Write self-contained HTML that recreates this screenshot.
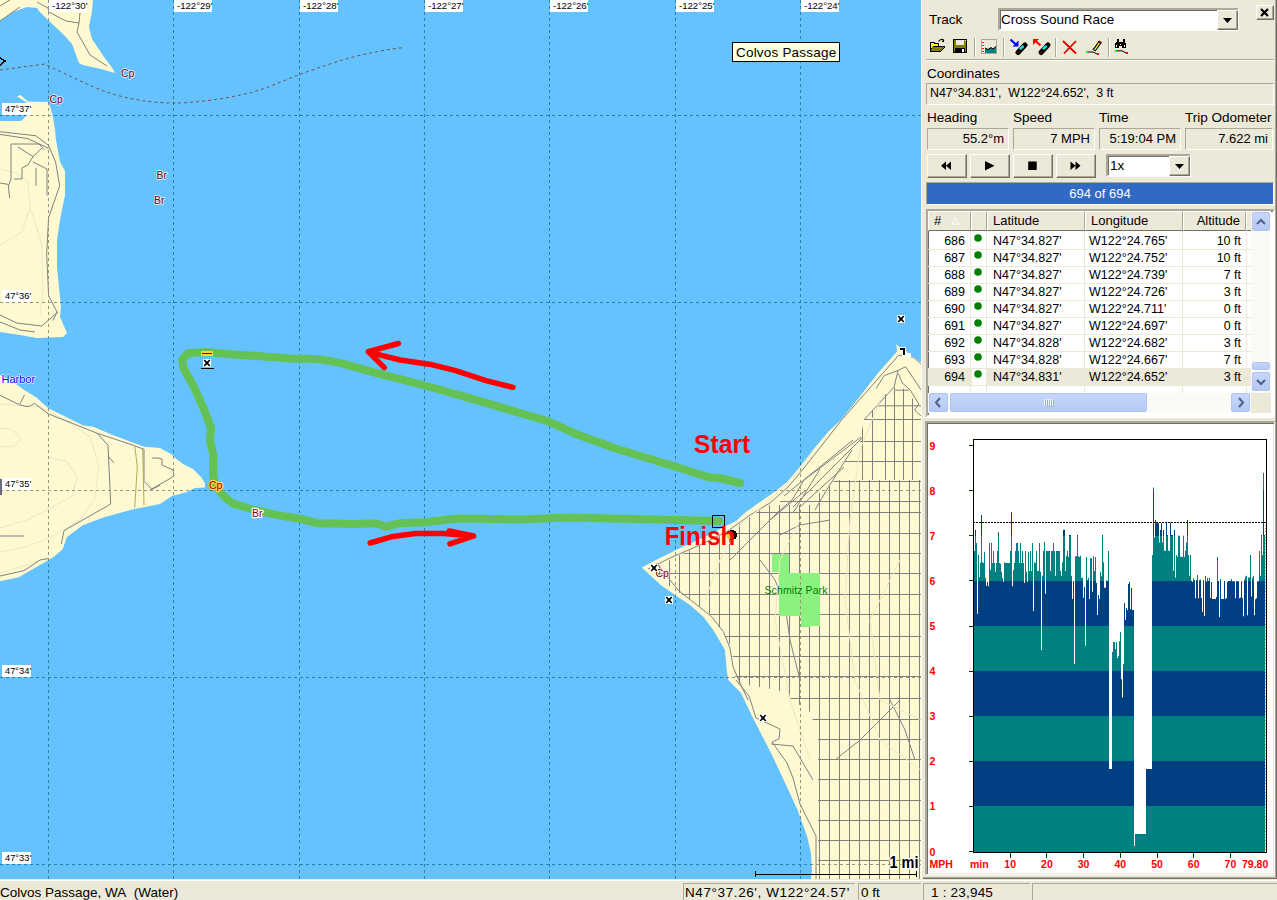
<!DOCTYPE html><html><head><meta charset="utf-8"><style>
*{box-sizing:border-box}
html,body{margin:0;padding:0}
body{width:1277px;height:900px;overflow:hidden;background:#ece9d8;position:relative;font-family:"Liberation Sans",sans-serif;font-size:13px;color:#000}
.a{position:absolute}
.sunk{position:absolute;border-top:1px solid #aca899;border-left:1px solid #aca899;border-bottom:1px solid #fff;border-right:1px solid #fff}
.fld{position:absolute;background:#ece9d8;border:1px solid #aca899;border-right-color:#fff;border-bottom-color:#fff;text-align:right;padding-right:4px;line-height:18px;font-size:13px}
.btn{position:absolute;background:#ece9d8;border:1px solid;border-color:#fff #716f64 #716f64 #fff;box-shadow:inset -1px -1px 0 #aca899}
.lbl{position:absolute;font-size:13.5px;line-height:15px;white-space:nowrap}
svg text{font-family:"Liberation Sans",sans-serif}

</style></head><body>
<svg class="a" style="left:0;top:0" width="921" height="879" viewBox="0 0 921 879" shape-rendering="crispEdges">
<rect width="921" height="879" fill="#64c2ff"/>
<defs><clipPath id="cD"><polygon points="896.2,344 899,347 904.7,349.8 911.8,356.4 921,362.2 921,879 811,879 812,871 811,853 807,836 798,811 787,787 771,753 753,718 741,693 728.3,680 726.7,670 725,650 713.3,630 703.3,616.7 690,605 675,595 661.7,585.8 641.7,567.5 656,560 678,549 707,536 724,527 736,521 746,512 760,502 773,493 787,482 799,468 813,450 828,432 840.7,420 856.7,400.4 869.1,384.4 878.9,372 885.1,364.9 892.2,356.9 897.1,351.6"/></clipPath>
<clipPath id="cG"><polygon points="921,392 921,879 818,879 818,735 810,712 778,690 740,684 734,675 732,648 720,628 708,612 690,600 668,585 652,570 660,565 680,555 710,541 730,531 745,520 765,507 790,497 825,492 836,478 843,463 858,449 861,436 864,419 878,404 884,396 893,386 896,389 903,388 912,399"/></clipPath></defs>
<polygon points="0,0 93,0 92,11 89,27 92,39 104,57 113,69 115,73 101,69 83,65 79,63 72,44 64,35 48,20 39,11 37,8 27,7 13,12 0,21" fill="#fff9d2" shape-rendering="auto"/>
<polygon points="0,121 21,121 26.5,115.5 27.5,103 17,96.5 20.4,95 28,101.6 47.8,102 49.9,106 53,117 55,130 56,140 60,162 65,171 65,195 60,220 57,240 57,268 61,307 60,317 67,333 63,337 37,338 20,335 0,332" fill="#fff9d2" shape-rendering="auto"/>
<polygon points="0,375 16.7,384.4 25,390.6 36,397.2 48.3,408.3 60,414 82.7,425.3 93.3,426.7 112,434.7 133.3,442.7 144,446.7 160,448 172,454.7 174,457 183,464 193,469 201,477 205,483 205,487.5 195,488 187,492 172,496 160,504 133.3,509.3 104,517.3 82.7,525.3 66.7,537.3 62.7,549.3 53.3,557.3 34.7,568 18.7,577.3 0,581.3" fill="#fff9d2" shape-rendering="auto"/>
<polygon points="896.2,344 899,347 904.7,349.8 911.8,356.4 921,362.2 921,879 811,879 812,871 811,853 807,836 798,811 787,787 771,753 753,718 741,693 728.3,680 726.7,670 725,650 713.3,630 703.3,616.7 690,605 675,595 661.7,585.8 641.7,567.5 656,560 678,549 707,536 724,527 736,521 746,512 760,502 773,493 787,482 799,468 813,450 828,432 840.7,420 856.7,400.4 869.1,384.4 878.9,372 885.1,364.9 892.2,356.9 897.1,351.6" fill="#fff9d2" shape-rendering="auto"/>
<g clip-path="url(#cG)"><path d="M862 380V480 M872.5 380V480 M885 380V480 M894.4 380V480 M903.3 380V480 M912.7 380V480 M780 419H921 M780 441H921 M780 461H921 M780 481H921 M780 501H921 M649 505V879 M659 505V879 M669 505V879 M679 505V879 M689 505V879 M699 505V879 M709 505V879 M719 505V879 M729 505V879 M739 505V879 M749 505V879 M759 505V879 M769 505V879 M779 505V879 M789 505V879 M799 505V879 M809 505V879 M819 480V879 M829 480V879 M839 480V879 M849 480V879 M859 480V879 M869 480V879 M879 480V879 M889 480V879 M899 480V879 M909 480V879 M919 480V879 M640 512H921 M640 533H921 M640 553H921 M640 573H921 M640 594H921 M640 614H921 M640 636H921 M640 656H921 M640 676H921 M640 698H921 M640 719H921 M640 739H921 M640 759H921 M640 779H921 M640 800H921 M640 820H921 M640 840H921 M640 860H921" stroke="#808080" stroke-width="1" fill="none"/></g>
<g clip-path="url(#cD)"><path d="M921 364L913.6 357.3L902 355.1L898.4 355.6L841.6 420L826 440L804 468L788 487L770 503L750 515L728 531L700 545L670 558L648 569 M876.2 388.4L884.2 375.6L897.6 370.7L905.6 366.7L921 389.8 M898 370.7L894 387.1L864.7 419.1 M898.5 373.8L902 382.7L910 389.8L919 404L914.5 410L921 416 M895.3 390.2H909M878 405.8H921 M861 437L820 468L804 480L792 500L778 512L765 525 M852 450L836 475L826 491L815 510 M736 680L749 696L756 718L780 729L779 739L772 742L787 763L793 778L800 804L816 836L816 879 M771 744L793 746L813 780 M760 560L775 580L785 605L790 640L800 680 M656.7 563.3L678 590L711.7 616.7L723.3 631.7L730 648L733 666.7L740 683L748 700 M780 535L800 525L830 520 M853 440L784 496 M862 438L793 507 M844 467L800 507 M820 469L793 513 M806 490L770 520L745 545L730 560 M835 760L860 740L880 720L900 700 M890 700L905 730L915 760" stroke="#808080" stroke-width="1" fill="none" shape-rendering="auto"/></g>
<polygon points="772,554 789,554 789,573 820,573 820,626 801,627 801,616 779,616 779,572 772,572" fill="#8cf27f"/>
<path clip-path="url(#cL)" d="M0 169L16.7 173L27.8 181.7L30.5 206.7L22 231.7L0 245.6 M31 210L42 245L43 290L40 315 M0 428L10.7 428.8L21.3 438.7L13.3 446.7L0 446.7 M48 457.3L66.7 461.3L77.3 477.3L72 496L48 509.3L26.7 520L0 528 M0 404L40 406.7L69 422.7L90.7 437.3L98.7 466.7L94.7 498.7L80 520L53.3 536L26.7 546.7L0 552 M0 573L26.7 565L48 557 M840 400L820 440L800 470L770 500L740 525L720 560L705 600 M880 400L860 450L850 520L845 600L855 680L880 740L921 770 M800 520L780 560L775 620L790 700L810 760 M900 560L870 620L880 700L921 720" stroke="#ece6c2" stroke-width="1" fill="none" shape-rendering="auto"/>
<path d="M37 2L48 8L49 12L66 21L79 23L80 13M79 23L77 32L90 55L107 66 M0 6L10 0M0 21L20 7 M0 131.7L36 135.8L48.6 145.6L55.6 162L59.7 185.8L48.6 217.8L46.7 253.9L48.6 295.6L57 312L52.8 320.6 M0 134.4L27.8 138.6L48.6 148.3 M11 144L11 179L8.3 186L9.7 198M11 144L39 144L44.4 149.7 M18 147L33 156.7L27.8 165L22 167.8L22 179L13.9 179M33 156.7L41.7 148.3M33 162L47 169L47 195.6M36 167.8L36 185.8M0 183L8.3 184.4 M0 315L16.7 323L41.7 326L58 312M0 322L20 330L35 332 M0 395.3L19.4 404.7L25.6 406.4L29.4 406.4L34.4 403.3L48.3 413.9L64 420L97.3 433.3L133.3 445.3L144 449.3L144 481.3L152 489.3L160 485.3M20 403.9L24.4 395 M97.3 433.3L108 445.3L110.7 504L64 530.7L61.3 544M109 457L114 463 M0 536L24 536M0 576L24 570.7L40 560L48 558.7 M152 458H158L162 459V465L173 470L174 475L171 478L150 490" stroke="#808080" stroke-width="1" fill="none" shape-rendering="auto"/>
<path d="M134.7 445.3L137.3 466.7L134.7 508M142.7 448L144 505.3" stroke="#b4ac50" stroke-width="1" fill="none" shape-rendering="auto"/>
<path d="M48.5 0V879 M173.5 0V879 M299.5 0V879 M424.5 0V879 M549.5 0V879 M675.5 0V879 M800.5 0V879 M0 115.5H921 M0 302.5H921 M0 490.5H921 M0 677.5H921 M0 864.5H921" stroke="#2a80a5" stroke-width="1" stroke-dasharray="3 3" fill="none"/>
<clipPath id="cL"><polygon points="0,0 93,0 92,11 89,27 92,39 104,57 113,69 115,73 101,69 83,65 79,63 72,44 64,35 48,20 39,11 37,8 27,7 13,12 0,21"/><polygon points="0,121 21,121 26.5,115.5 27.5,103 17,96.5 20.4,95 28,101.6 47.8,102 49.9,106 53,117 55,130 56,140 60,162 65,171 65,195 60,220 57,240 57,268 61,307 60,317 67,333 63,337 37,338 20,335 0,332"/><polygon points="0,375 16.7,384.4 25,390.6 36,397.2 48.3,408.3 60,414 82.7,425.3 93.3,426.7 112,434.7 133.3,442.7 144,446.7 160,448 172,454.7 174,457 183,464 193,469 201,477 205,483 205,487.5 195,488 187,492 172,496 160,504 133.3,509.3 104,517.3 82.7,525.3 66.7,537.3 62.7,549.3 53.3,557.3 34.7,568 18.7,577.3 0,581.3"/><polygon points="896.2,344 899,347 904.7,349.8 911.8,356.4 921,362.2 921,879 811,879 812,871 811,853 807,836 798,811 787,787 771,753 753,718 741,693 728.3,680 726.7,670 725,650 713.3,630 703.3,616.7 690,605 675,595 661.7,585.8 641.7,567.5 656,560 678,549 707,536 724,527 736,521 746,512 760,502 773,493 787,482 799,468 813,450 828,432 840.7,420 856.7,400.4 869.1,384.4 878.9,372 885.1,364.9 892.2,356.9 897.1,351.6"/></clipPath>
<path clip-path="url(#cL)" d="M48.5 0V879 M173.5 0V879 M299.5 0V879 M424.5 0V879 M549.5 0V879 M675.5 0V879 M800.5 0V879 M0 115.5H921 M0 302.5H921 M0 490.5H921 M0 677.5H921 M0 864.5H921" stroke="#96947c" stroke-width="1" stroke-dasharray="3 3" fill="none"/>
<path d="M0 70L45 64L50 66.7C70 76 90 86 105 91.5C125 98.5 150 103 173 103C195 103 225 99 250.6 92.7C268 88 285 80 300.8 74C318 68 335 62 351 57.6C370 52.5 390 49 403.5 47.6" stroke="#6e5448" stroke-width="1" stroke-dasharray="3 3" fill="none" shape-rendering="auto"/>
<rect x="49" y="0" width="38" height="12" fill="#fff"/><text x="52" y="9.3" font-size="9.6" fill="#000">-122°30'</text>
<rect x="174" y="0" width="38" height="12" fill="#fff"/><text x="177" y="9.3" font-size="9.6" fill="#000">-122°29'</text>
<rect x="300" y="0" width="38" height="12" fill="#fff"/><text x="303" y="9.3" font-size="9.6" fill="#000">-122°28'</text>
<rect x="425" y="0" width="38" height="12" fill="#fff"/><text x="428" y="9.3" font-size="9.6" fill="#000">-122°27'</text>
<rect x="550" y="0" width="38" height="12" fill="#fff"/><text x="553" y="9.3" font-size="9.6" fill="#000">-122°26'</text>
<rect x="676" y="0" width="38" height="12" fill="#fff"/><text x="679" y="9.3" font-size="9.6" fill="#000">-122°25'</text>
<rect x="801" y="0" width="38" height="12" fill="#fff"/><text x="804" y="9.3" font-size="9.6" fill="#000">-122°24'</text>
<rect x="2" y="103" width="29" height="12" fill="#fff"/><text x="5" y="111.8" font-size="9.3" fill="#000">47°37'</text>
<rect x="2" y="290" width="29" height="12" fill="#fff"/><text x="5" y="298.8" font-size="9.3" fill="#000">47°36'</text>
<rect x="2" y="478" width="29" height="12" fill="#fff"/><text x="5" y="486.8" font-size="9.3" fill="#000">47°35'</text>
<rect x="2" y="665" width="29" height="12" fill="#fff"/><text x="5" y="673.8" font-size="9.3" fill="#000">47°34'</text>
<rect x="2" y="852" width="29" height="12" fill="#fff"/><text x="5" y="860.8" font-size="9.3" fill="#000">47°33'</text>
<polyline points="740,483 719,478 708,477 670,465 614,448 576,434 549,421.6 520,413 468,397.7 424.7,385.5 374,372.3 340,362.9 317.6,359 290,358.5 241,354.9 205.6,352 187.8,353.3 182.2,360 183.3,367.8 194.4,387.8 203.3,407.8 211,427.8 210,441 213.3,454.4 213.3,476.7 215.5,485.6 223.3,495.6 232.2,503.3 254.4,510 280,515.7 298.8,518.5 317.6,523.2 355.2,524.1 375.9,523.2 385.3,526.6 400.3,523.2 424.7,522.3 458.6,518.5 520,519.4 567,517.5 632.8,519 719,521" fill="none" stroke="#64c255" stroke-width="8" stroke-linejoin="round" stroke-linecap="round" shape-rendering="auto"/>
<path d="M513 387.3L486.8 380.8L454.8 370.4L432.3 364.8L400.3 360L381.5 355.4L368.3 351.6L398.4 343.5M368.3 351.6L384.3 367.6" fill="none" stroke="#ff0000" stroke-width="5.5" stroke-linejoin="round" stroke-linecap="round" shape-rendering="auto"/>
<path d="M370.2 543L392.8 536.4L415.3 533.5L443.5 533.5L473.6 536L449.2 531M473.6 536L450 543.9" fill="none" stroke="#ff0000" stroke-width="5.5" stroke-linejoin="round" stroke-linecap="round" shape-rendering="auto"/>
<text x="694" y="452.6" font-size="25.5" textLength="56.3" lengthAdjust="spacingAndGlyphs" font-weight="bold" fill="#ff0000">Start</text>
<rect x="712.5" y="515.5" width="12" height="12" fill="none" stroke="#000" stroke-width="1"/>
<circle cx="732" cy="535" r="5" fill="#000"/><circle cx="730" cy="536" r="3" fill="#d8d030"/>
<text x="664.7" y="544.8" font-size="26" textLength="70.5" lengthAdjust="spacingAndGlyphs" font-weight="bold" fill="#ff0000">Finish</text>
<text x="764.5" y="593.5" font-size="10.5" fill="#008000" letter-spacing="0.1">Schmitz Park</text>
<text x="1.5" y="383" font-size="11" fill="#0000ff" stroke="#fff" stroke-width="1.2" paint-order="stroke" stroke-linejoin="round">Harbor</text>
<text x="121" y="76.5" font-size="10.5" fill="#800000" stroke="#fff" stroke-width="1.6" stroke-opacity="0.8" paint-order="stroke" stroke-linejoin="round">Cp</text>
<text x="49.5" y="102.8" font-size="10.5" fill="#800000" stroke="#fff" stroke-width="1.6" stroke-opacity="0.8" paint-order="stroke" stroke-linejoin="round">Cp</text>
<text x="156.5" y="179" font-size="10.5" fill="#800000" stroke="#fff" stroke-width="1.6" stroke-opacity="0.8" paint-order="stroke" stroke-linejoin="round">Br</text>
<text x="154" y="204" font-size="10.5" fill="#800000" stroke="#fff" stroke-width="1.6" stroke-opacity="0.8" paint-order="stroke" stroke-linejoin="round">Br</text>
<text x="655.5" y="576.5" font-size="10.5" fill="#800000" stroke="#fff" stroke-width="1.6" stroke-opacity="0.8" paint-order="stroke" stroke-linejoin="round">Cp</text>
<text x="209" y="489" font-size="10.5" fill="#a00000" stroke="#ffd040" stroke-width="2.5" paint-order="stroke" stroke-linejoin="round">Cp</text>
<text x="252" y="517" font-size="10.5" fill="#900000" stroke="#fff" stroke-width="2.5" paint-order="stroke" stroke-linejoin="round">Br</text>
<rect x="897" y="314.5" width="8" height="8.5" fill="#fff"/><path d="M898.2 316L903.8 322M903.8 316L898.2 322" stroke="#000" stroke-width="1.6" shape-rendering="auto"/><circle cx="901" cy="319" r="2.2" fill="#000" opacity="0.35"/>
<rect x="650" y="563.5" width="8" height="8.5" fill="#fff"/><path d="M651.2 565L656.8 571M656.8 565L651.2 571" stroke="#000" stroke-width="1.6" shape-rendering="auto"/><circle cx="654" cy="568" r="2.2" fill="#000" opacity="0.35"/>
<rect x="665" y="595.5" width="8" height="8.5" fill="#fff"/><path d="M666.2 597L671.8 603M671.8 597L666.2 603" stroke="#000" stroke-width="1.6" shape-rendering="auto"/><circle cx="669" cy="600" r="2.2" fill="#000" opacity="0.35"/>
<rect x="759" y="713.5" width="8" height="8.5" fill="#fff"/><path d="M760.2 715L765.8 721M765.8 715L760.2 721" stroke="#000" stroke-width="1.6" shape-rendering="auto"/><circle cx="763" cy="718" r="2.2" fill="#000" opacity="0.35"/>
<rect x="203" y="358.5" width="8" height="8.5" fill="#fff"/><path d="M204.2 360L209.8 366M209.8 360L204.2 366" stroke="#000" stroke-width="1.6" shape-rendering="auto"/><circle cx="207" cy="363" r="2.2" fill="#000" opacity="0.35"/>
<rect x="201" y="351" width="12" height="5" fill="#ffd040"/><path d="M202 353H212" stroke="#a00000"/><rect x="201" y="368" width="13" height="1" fill="#000"/>
<rect x="732.5" y="42.5" width="107" height="19" fill="#ffffe1" stroke="#000"/><text x="736" y="57" font-size="13.5" letter-spacing="0.2" fill="#000">Colvos Passage</text>
<text x="889.5" y="867.8" font-size="17" font-weight="bold" textLength="29" lengthAdjust="spacingAndGlyphs" fill="#000" stroke="#fff" stroke-width="3" paint-order="stroke" stroke-linejoin="round">1 mi</text>
<path d="M755.5 871V877M755.5 874H917M916.5 871V877" stroke="#000" stroke-width="1" fill="none"/>
<path d="M0 58L5 61L0 65" stroke="#000" fill="none" stroke-width="1.5"/><rect x="0" y="479" width="1.5" height="16" fill="#6a6a78"/>
<path d="M900 349H904V355H911" stroke="#fff" stroke-width="3.6" fill="none"/><path d="M900 349H904V355" stroke="#000" stroke-width="1.8" fill="none"/>
</svg>
<div class="a" style="left:921px;top:0;width:1px;height:879px;background:#fff"></div>
<div class="a" style="left:1275px;top:0;width:1px;height:879px;background:#aca899"></div>
<div class="a" style="left:1276px;top:0;width:1px;height:879px;background:#716f64"></div>
<div class="lbl" style="left:929px;top:12px">Track</div>
<div class="a" style="left:998px;top:8px;width:241px;height:23px;background:#fff;border:2px solid;border-color:#aca899 #fff #fff #aca899;box-shadow:inset 1px 1px 0 #716f64"></div>
<div class="lbl" style="left:1001px;top:12px">Cross Sound Race</div>
<div class="btn" style="left:1217px;top:10px;width:21px;height:20px"></div>
<svg class="a" style="left:1217px;top:10px" width="21" height="20"><path d="M6 8H15L10.5 13Z" fill="#000"/></svg>
<div class="btn" style="left:1256px;top:5px;width:18px;height:15px"></div>
<svg class="a" style="left:1256px;top:5px" width="18" height="15"><path d="M5 4L12 11M12 4L5 11" stroke="#000" stroke-width="2.2"/></svg>
<svg class="a" style="left:921px;top:33px" width="356" height="30" shape-rendering="crispEdges">
<g transform="translate(-921,-33)">
<path d="M930 42H934L935 43H939V46H945V47L941 52H930Z" fill="#000"/>
<path d="M931 43H934V44H938V46H933L931 49Z" fill="#ffff00"/>
<path d="M932 47H944L940 51H931Z" fill="#808000"/>
<path d="M938.5 41.5Q941 38 944 40.5" stroke="#000" fill="none" stroke-width="1.2" shape-rendering="auto"/>
<path d="M943 39.5L945 42.5L942 42Z" fill="#000"/>
<rect x="953" y="39" width="14" height="14" fill="#000"/>
<rect x="954" y="40" width="12" height="12" fill="#808000"/>
<rect x="956" y="40" width="8" height="5" fill="#ece9d8"/>
<rect x="955" y="48" width="10" height="5" fill="#000"/>
<rect x="962" y="49" width="2" height="3" fill="#fff"/>
<rect x="965" y="40" width="1" height="1" fill="#fff"/>
<rect x="974" y="38" width="1" height="19" fill="#aca899"/><rect x="975" y="38" width="1" height="19" fill="#fff"/>
<rect x="981" y="39" width="16" height="15" fill="#aca899"/>
<rect x="982" y="40" width="14" height="13" fill="#ece9d8"/>
<rect x="982" y="40" width="2" height="13" fill="#fff"/>
<path d="M982 42.5H984M982 45.5H984M982 48.5H984M982 51.5H984" stroke="#ff0000"/>
<path d="M985 48L988 49.5L991 47.5L993 49L996 46.5V53H985Z" fill="#008080" shape-rendering="auto"/>
<path d="M985 48L988 49.5L991 47.5L993 49L996 46.5" stroke="#000" fill="none" shape-rendering="auto"/>
<rect x="1003" y="38" width="1" height="19" fill="#aca899"/><rect x="1004" y="38" width="1" height="19" fill="#fff"/>
<path d="M1010.5 39.5L1017 45.5" stroke="#0000ff" stroke-width="2.2" shape-rendering="auto"/><path d="M1018.5 46.5L1012.5 46.5L1018.5 40.5Z" fill="#0000ff" shape-rendering="auto"/>
<path d="M1018 52.5L1025 45" stroke="#000" stroke-width="5" stroke-linecap="round" shape-rendering="auto"/><path d="M1020.5 48.5L1023 46.5" stroke="#00e8f0" stroke-width="2.4" stroke-linecap="round" shape-rendering="auto"/><path d="M1017.5 53L1019.5 51" stroke="#a00000" stroke-width="1" shape-rendering="auto"/>
<path d="M1040.5 45.5L1034 39.5" stroke="#ff0000" stroke-width="2.2" shape-rendering="auto"/><path d="M1033 39L1039 39L1033 45Z" fill="#ff0000" shape-rendering="auto"/>
<path d="M1041 52.5L1048 45" stroke="#000" stroke-width="5" stroke-linecap="round" shape-rendering="auto"/><path d="M1043.5 48.5L1046 46.5" stroke="#00e8f0" stroke-width="2.4" stroke-linecap="round" shape-rendering="auto"/><path d="M1040.5 53L1042.5 51" stroke="#a00000" stroke-width="1" shape-rendering="auto"/>
<rect x="1055" y="38" width="1" height="19" fill="#aca899"/><rect x="1056" y="38" width="1" height="19" fill="#fff"/>
<path d="M1063 41L1076 53.5M1076 41L1064 53.5" stroke="#e00000" stroke-width="1.8" shape-rendering="auto"/>
<path d="M1094 50.5L1100.5 41.5" stroke="#000" stroke-width="3.6" shape-rendering="auto"/><path d="M1094.6 49.8L1099.6 42.6" stroke="#ffff00" stroke-width="1.3" shape-rendering="auto"/><path d="M1099 41.5L1101 43" stroke="#800000" stroke-width="2" shape-rendering="auto"/>
<path d="M1087 52H1093L1097 54" stroke="#000" fill="none" shape-rendering="auto"/>
<rect x="1086" y="51" width="2" height="2" fill="#00ff00"/><rect x="1097" y="53" width="2" height="2" fill="#ff0000"/>
<rect x="1108" y="38" width="1" height="19" fill="#aca899"/><rect x="1109" y="38" width="1" height="19" fill="#fff"/>
<path d="M1116.5 39H1118.5V42H1122.5V39H1124.5V42L1126 43V48H1122V46H1119V48H1115V43L1116.5 42Z" fill="#000"/>
<rect x="1116" y="45" width="1" height="2" fill="#fff"/><rect x="1124" y="45" width="1" height="2" fill="#fff"/><rect x="1120" y="43.5" width="1" height="1" fill="#fff"/>
<path d="M1116 50.8H1122L1126 53" stroke="#000" fill="none" shape-rendering="auto"/>
<rect x="1115" y="50" width="2" height="2" fill="#00ff00"/><rect x="1126" y="52" width="2" height="2" fill="#ff0000"/>
<rect x="926" y="59" width="348" height="1" fill="#aca899"/><rect x="926" y="60" width="348" height="1" fill="#fff"/>
</g></svg>
<div class="lbl" style="left:927px;top:66px">Coordinates</div>
<div class="fld" style="left:926px;top:83px;width:348px;height:22px;text-align:left;padding-left:3px;line-height:19px;font-size:12.4px">N47°34.831&#39;,&nbsp; W122°24.652&#39;,&nbsp; 3 ft</div>
<div class="lbl" style="left:927px;top:110px">Heading</div>
<div class="lbl" style="left:1013px;top:110px">Speed</div>
<div class="lbl" style="left:1099px;top:110px">Time</div>
<div class="lbl" style="left:1185px;top:110px">Trip Odometer</div>
<div class="fld" style="left:927px;top:128px;width:82px;height:22px;line-height:19px">55.2°m</div>
<div class="fld" style="left:1013px;top:128px;width:82px;height:22px;line-height:19px">7 MPH</div>
<div class="fld" style="left:1099px;top:128px;width:82px;height:22px;line-height:19px">5:19:04 PM</div>
<div class="fld" style="left:1185px;top:128px;width:88px;height:22px;line-height:19px">7.622 mi</div>
<div class="btn" style="left:927px;top:154px;width:40px;height:24px"></div>
<svg class="a" style="left:928px;top:154px" width="40" height="24" fill="#000"><path d="M13 11.8L18 7.5V16ZM18 11.8L23 7.5V16Z"/></svg>
<div class="btn" style="left:970px;top:154px;width:40px;height:24px"></div>
<svg class="a" style="left:971px;top:154px" width="40" height="24" fill="#000"><path d="M14 7L23.5 11.8L14 16.6Z"/></svg>
<div class="btn" style="left:1013px;top:154px;width:40px;height:24px"></div>
<svg class="a" style="left:1014px;top:154px" width="40" height="24" fill="#000"><rect x="14.2" y="7.5" width="8.5" height="8.5"/></svg>
<div class="btn" style="left:1056px;top:154px;width:40px;height:24px"></div>
<svg class="a" style="left:1057px;top:154px" width="40" height="24" fill="#000"><path d="M13.5 7.5L18.5 11.8L13.5 16ZM18.5 7.5L23.5 11.8L18.5 16Z"/></svg>
<div class="a" style="left:1106px;top:154px;width:85px;height:23px;background:#fff;border:2px solid;border-color:#aca899 #fff #fff #aca899;box-shadow:inset 1px 1px 0 #716f64"></div>
<div class="lbl" style="left:1110px;top:158px">1x</div>
<div class="btn" style="left:1169px;top:156px;width:21px;height:20px"></div>
<svg class="a" style="left:1169px;top:156px" width="21" height="20"><path d="M6 8H15L10.5 13Z" fill="#000"/></svg>
<div class="a" style="left:926px;top:182px;width:348px;height:23px;background:#316ac5;border:1px solid;border-color:#aca899 #fff #fff #aca899"></div>
<div class="a" style="left:926px;top:186px;width:348px;text-align:center;color:#fff;font-size:13px;line-height:15px">694 of 694</div>
<div class="a" style="left:926px;top:209px;width:349px;height:208px;border:2px solid;border-color:#aca899 #fff #fff #aca899;background:#fff;box-shadow:inset 1px 1px 0 #716f64"></div>
<div class="a" style="left:928px;top:211px;width:43px;height:20px;background:#ece9d8;border:1px solid;border-color:#fff #aca899 #716f64 #fff;font-size:13px;line-height:18px;text-align:left;padding-left:5px">#</div>
<div class="a" style="left:971px;top:211px;width:16px;height:20px;background:#ece9d8;border:1px solid;border-color:#fff #aca899 #716f64 #fff;font-size:13px;line-height:18px;text-align:left;padding-left:5px"></div>
<div class="a" style="left:987px;top:211px;width:98px;height:20px;background:#ece9d8;border:1px solid;border-color:#fff #aca899 #716f64 #fff;font-size:13px;line-height:18px;text-align:left;padding-left:5px">Latitude</div>
<div class="a" style="left:1085px;top:211px;width:98px;height:20px;background:#ece9d8;border:1px solid;border-color:#fff #aca899 #716f64 #fff;font-size:13px;line-height:18px;text-align:left;padding-left:5px">Longitude</div>
<div class="a" style="left:1183px;top:211px;width:63px;height:20px;background:#ece9d8;border:1px solid;border-color:#fff #aca899 #716f64 #fff;font-size:13px;line-height:18px;text-align:right;padding-right:5px">Altitude</div>
<div class="a" style="left:1246px;top:211px;width:5px;height:20px;background:#ece9d8;border:1px solid;border-color:#fff #aca899 #716f64 #fff;font-size:13px;line-height:18px;text-align:left;padding-left:5px"></div>
<svg class="a" style="left:951px;top:217px" width="9" height="8"><path d="M4.5 1L8 7H1Z" fill="none" stroke="#fff"/></svg>
<div class="a" style="left:928px;top:233px;width:37px;text-align:right;font-size:12.5px;line-height:17px">686</div>
<svg class="a" style="left:973px;top:233px" width="10" height="10"><circle cx="5" cy="5" r="3.8" fill="#008000"/></svg>
<div class="a" style="left:993px;top:233px;font-size:12.5px;line-height:17px;white-space:nowrap">N47°34.827&#39;</div>
<div class="a" style="left:1089px;top:233px;font-size:12.5px;line-height:17px;white-space:nowrap">W122°24.765&#39;</div>
<div class="a" style="left:1183px;top:233px;width:58px;text-align:right;font-size:12.5px;line-height:17px">10 ft</div>
<div class="a" style="left:928px;top:250px;width:37px;text-align:right;font-size:12.5px;line-height:17px">687</div>
<svg class="a" style="left:973px;top:250px" width="10" height="10"><circle cx="5" cy="5" r="3.8" fill="#008000"/></svg>
<div class="a" style="left:993px;top:250px;font-size:12.5px;line-height:17px;white-space:nowrap">N47°34.827&#39;</div>
<div class="a" style="left:1089px;top:250px;font-size:12.5px;line-height:17px;white-space:nowrap">W122°24.752&#39;</div>
<div class="a" style="left:1183px;top:250px;width:58px;text-align:right;font-size:12.5px;line-height:17px">10 ft</div>
<div class="a" style="left:928px;top:267px;width:37px;text-align:right;font-size:12.5px;line-height:17px">688</div>
<svg class="a" style="left:973px;top:267px" width="10" height="10"><circle cx="5" cy="5" r="3.8" fill="#008000"/></svg>
<div class="a" style="left:993px;top:267px;font-size:12.5px;line-height:17px;white-space:nowrap">N47°34.827&#39;</div>
<div class="a" style="left:1089px;top:267px;font-size:12.5px;line-height:17px;white-space:nowrap">W122°24.739&#39;</div>
<div class="a" style="left:1183px;top:267px;width:58px;text-align:right;font-size:12.5px;line-height:17px">7 ft</div>
<div class="a" style="left:928px;top:284px;width:37px;text-align:right;font-size:12.5px;line-height:17px">689</div>
<svg class="a" style="left:973px;top:284px" width="10" height="10"><circle cx="5" cy="5" r="3.8" fill="#008000"/></svg>
<div class="a" style="left:993px;top:284px;font-size:12.5px;line-height:17px;white-space:nowrap">N47°34.827&#39;</div>
<div class="a" style="left:1089px;top:284px;font-size:12.5px;line-height:17px;white-space:nowrap">W122°24.726&#39;</div>
<div class="a" style="left:1183px;top:284px;width:58px;text-align:right;font-size:12.5px;line-height:17px">3 ft</div>
<div class="a" style="left:928px;top:301px;width:37px;text-align:right;font-size:12.5px;line-height:17px">690</div>
<svg class="a" style="left:973px;top:301px" width="10" height="10"><circle cx="5" cy="5" r="3.8" fill="#008000"/></svg>
<div class="a" style="left:993px;top:301px;font-size:12.5px;line-height:17px;white-space:nowrap">N47°34.827&#39;</div>
<div class="a" style="left:1089px;top:301px;font-size:12.5px;line-height:17px;white-space:nowrap">W122°24.711&#39;</div>
<div class="a" style="left:1183px;top:301px;width:58px;text-align:right;font-size:12.5px;line-height:17px">0 ft</div>
<div class="a" style="left:928px;top:318px;width:37px;text-align:right;font-size:12.5px;line-height:17px">691</div>
<svg class="a" style="left:973px;top:318px" width="10" height="10"><circle cx="5" cy="5" r="3.8" fill="#008000"/></svg>
<div class="a" style="left:993px;top:318px;font-size:12.5px;line-height:17px;white-space:nowrap">N47°34.827&#39;</div>
<div class="a" style="left:1089px;top:318px;font-size:12.5px;line-height:17px;white-space:nowrap">W122°24.697&#39;</div>
<div class="a" style="left:1183px;top:318px;width:58px;text-align:right;font-size:12.5px;line-height:17px">0 ft</div>
<div class="a" style="left:928px;top:335px;width:37px;text-align:right;font-size:12.5px;line-height:17px">692</div>
<svg class="a" style="left:973px;top:335px" width="10" height="10"><circle cx="5" cy="5" r="3.8" fill="#008000"/></svg>
<div class="a" style="left:993px;top:335px;font-size:12.5px;line-height:17px;white-space:nowrap">N47°34.828&#39;</div>
<div class="a" style="left:1089px;top:335px;font-size:12.5px;line-height:17px;white-space:nowrap">W122°24.682&#39;</div>
<div class="a" style="left:1183px;top:335px;width:58px;text-align:right;font-size:12.5px;line-height:17px">3 ft</div>
<div class="a" style="left:928px;top:352px;width:37px;text-align:right;font-size:12.5px;line-height:17px">693</div>
<svg class="a" style="left:973px;top:352px" width="10" height="10"><circle cx="5" cy="5" r="3.8" fill="#008000"/></svg>
<div class="a" style="left:993px;top:352px;font-size:12.5px;line-height:17px;white-space:nowrap">N47°34.828&#39;</div>
<div class="a" style="left:1089px;top:352px;font-size:12.5px;line-height:17px;white-space:nowrap">W122°24.667&#39;</div>
<div class="a" style="left:1183px;top:352px;width:58px;text-align:right;font-size:12.5px;line-height:17px">7 ft</div>
<div class="a" style="left:928px;top:368px;width:323px;height:18px;background:#ece9d8"></div>
<div class="a" style="left:972px;top:369px;width:14px;height:17px;background:#fff"></div>
<div class="a" style="left:928px;top:369px;width:37px;text-align:right;font-size:12.5px;line-height:17px">694</div>
<svg class="a" style="left:973px;top:369px" width="10" height="10"><circle cx="5" cy="5" r="3.8" fill="#008000"/></svg>
<div class="a" style="left:993px;top:369px;font-size:12.5px;line-height:17px;white-space:nowrap">N47°34.831&#39;</div>
<div class="a" style="left:1089px;top:369px;font-size:12.5px;line-height:17px;white-space:nowrap">W122°24.652&#39;</div>
<div class="a" style="left:1183px;top:369px;width:58px;text-align:right;font-size:12.5px;line-height:17px">3 ft</div>
<svg class="a" style="left:0;top:0" width="1277" height="420"><path d="M928 249.5H1251 M928 266.5H1251 M928 283.5H1251 M928 300.5H1251 M928 317.5H1251 M928 334.5H1251 M928 351.5H1251 M928 368.5H1251 M928 385.5H1251 M928 402.5H1251 M970.5 231V393 M986.5 231V393 M1084.5 231V393 M1182.5 231V393 M1246.5 231V393" stroke="#ebe8d6" stroke-width="1" fill="none"/></svg>
<div class="a" style="left:1251px;top:211px;width:20px;height:182px;background:#fafaf7"></div>
<div class="a" style="left:1252px;top:212px;width:18px;height:19px;background:linear-gradient(#c8d6fb,#b4c8f6);border:1px solid #b0c4f0;border-radius:2px"></div>
<svg class="a" style="left:1252px;top:212px" width="18" height="19"><path d="M5 12L9 8L13 12" stroke="#4d6185" stroke-width="2" fill="none"/></svg>
<div class="a" style="left:1252px;top:362px;width:18px;height:8px;background:linear-gradient(#c8d6fb,#b4c8f6);border:1px solid #b0c4f0;border-radius:2px"></div>
<div class="a" style="left:1252px;top:372px;width:18px;height:19px;background:linear-gradient(#c8d6fb,#b4c8f6);border:1px solid #b0c4f0;border-radius:2px"></div>
<svg class="a" style="left:1252px;top:372px" width="18" height="19"><path d="M5 8L9 12L13 8" stroke="#4d6185" stroke-width="2" fill="none"/></svg>
<div class="a" style="left:928px;top:393px;width:323px;height:20px;background:#fafaf7"></div>
<div class="a" style="left:929px;top:393px;width:19px;height:19px;background:linear-gradient(#c8d6fb,#b4c8f6);border:1px solid #b0c4f0;border-radius:2px"></div>
<svg class="a" style="left:929px;top:393px" width="19" height="19"><path d="M11 5L7 9.5L11 14" stroke="#4d6185" stroke-width="2" fill="none"/></svg>
<div class="a" style="left:950px;top:393px;width:197px;height:19px;background:linear-gradient(#c8d6fb,#b4c8f6);border:1px solid #b0c4f0;border-radius:2px"></div>
<svg class="a" style="left:950px;top:393px" width="197" height="19"><path d="M94.5 6V13M96.5 6V13M98.5 6V13M100.5 6V13M102.5 6V13" stroke="#f4f7ff" stroke-width="1"/><path d="M95.5 7V14M97.5 7V14M99.5 7V14M101.5 7V14M103.5 7V14" stroke="#98aee0" stroke-width="1"/></svg>
<div class="a" style="left:1231px;top:393px;width:19px;height:19px;background:linear-gradient(#c8d6fb,#b4c8f6);border:1px solid #b0c4f0;border-radius:2px"></div>
<svg class="a" style="left:1231px;top:393px" width="19" height="19"><path d="M8 5L12 9.5L8 14" stroke="#4d6185" stroke-width="2" fill="none"/></svg>
<div class="a" style="left:1251px;top:393px;width:20px;height:20px;background:#ece9d8"></div>
<div class="a" style="left:923px;top:417px;width:352px;height:1px;background:#fff"></div>
<div class="a" style="left:925px;top:421px;width:350px;height:454px;border-top:2px solid #aca899;border-left:2px solid #aca899;border-bottom:1px solid #fff;border-right:1px solid #fff;box-shadow:inset 1px 1px 0 #716f64"></div>
<div class="a" style="left:928px;top:424px;width:345px;height:449px;background:#fff"></div>
<div class="a" style="left:923px;top:878px;width:354px;height:1px;background:#716f64"></div>
<div class="a" style="left:923px;top:877px;width:354px;height:1px;background:#aca899"></div>
<svg class="a" style="left:921px;top:420px" width="356" height="460" shape-rendering="crispEdges">
<g transform="translate(-921,-420)">
<clipPath id="cc"><path d="M974 852.5L974 551.0L975 551.0L975 529.7L976 529.7L976 543.0L977 543.0L977 613.7L978 613.7L978 555.0L979 555.0L979 577.0L980 577.0L980 563.0L981 563.0L981 515.0L982 515.0L982 562.3L983 562.3L983 563.0L984 563.0L984 551.7L985 551.7L985 577.7L986 577.7L986 585.7L987 585.7L987 581.7L988 581.7L988 586.3L989 586.3L989 543.0L990 543.0L990 569.7L991 569.7L991 543.0L992 543.0L992 563.0L993 563.0L993 551.0L994 551.0L994 563.0L995 563.0L995 571.7L996 571.7L996 563.0L997 563.0L997 551.0L998 551.0L998 532.3L999 532.3L999 563.0L1000 563.0L1000 563.7L1001 563.7L1001 571.7L1002 571.7L1002 577.7L1003 577.7L1003 581.7L1004 581.7L1004 562.3L1005 562.3L1005 563.0L1006 563.0L1006 563.0L1007 563.0L1007 563.0L1008 563.0L1008 563.0L1009 563.0L1009 563.0L1010 563.0L1010 551.0L1011 551.0L1011 512.3L1012 512.3L1012 586.3L1013 586.3L1013 570.3L1014 570.3L1014 563.0L1015 563.0L1015 551.0L1016 551.0L1016 543.0L1017 543.0L1017 543.0L1018 543.0L1018 551.0L1019 551.0L1019 563.0L1020 563.0L1020 543.0L1021 543.0L1021 563.0L1022 563.0L1022 551.0L1023 551.0L1023 563.0L1024 563.0L1024 583.0L1025 583.0L1025 551.0L1026 551.0L1026 571.7L1027 571.7L1027 581.7L1028 581.7L1028 551.7L1029 551.7L1029 571.0L1030 571.0L1030 551.0L1031 551.0L1031 571.0L1032 571.0L1032 543.0L1033 543.0L1033 611.0L1034 611.0L1034 562.3L1035 562.3L1035 563.0L1036 563.0L1036 551.0L1037 551.0L1037 571.0L1038 571.0L1038 571.0L1039 571.0L1039 543.0L1040 543.0L1040 571.7L1041 571.7L1041 650L1042 650L1042 575.7L1043 575.7L1043 551.0L1044 551.0L1044 541.7L1045 541.7L1045 593.7L1046 593.7L1046 551.0L1047 551.0L1047 551.0L1048 551.0L1048 551.0L1049 551.0L1049 551.0L1050 551.0L1050 571.0L1051 571.0L1051 551.0L1052 551.0L1052 551.0L1053 551.0L1053 543.0L1054 543.0L1054 551.0L1055 551.0L1055 575.7L1056 575.7L1056 551.0L1057 551.0L1057 551.0L1058 551.0L1058 551.0L1059 551.0L1059 551.0L1060 551.0L1060 571.0L1061 571.0L1061 575.7L1062 575.7L1062 562.3L1063 562.3L1063 529.7L1064 529.7L1064 529.7L1065 529.7L1065 571.0L1066 571.0L1066 555.7L1067 555.7L1067 551.0L1068 551.0L1068 557.0L1069 557.0L1069 535.0L1070 535.0L1070 535.0L1071 535.0L1071 575.7L1072 575.7L1072 599.0L1073 599.0L1073 581.0L1074 581.0L1074 664L1075 664L1075 556.3L1076 556.3L1076 556.3L1077 556.3L1077 535.0L1078 535.0L1078 556.3L1079 556.3L1079 557.0L1080 557.0L1080 555.7L1081 555.7L1081 577.7L1082 577.7L1082 577.7L1083 577.7L1083 597.7L1084 597.7L1084 587.0L1085 587.0L1085 645.5L1086 645.5L1086 557.0L1087 557.0L1087 579.7L1088 579.7L1088 577.7L1089 577.7L1089 599.0L1090 599.0L1090 558.3L1091 558.3L1091 558.3L1092 558.3L1092 591.7L1093 591.7L1093 556.3L1094 556.3L1094 571.0L1095 571.0L1095 557.0L1096 557.0L1096 583.0L1097 583.0L1097 615.0L1098 615.0L1098 595.0L1099 595.0L1099 599.0L1100 599.0L1100 571.7L1101 571.7L1101 576.3L1102 576.3L1102 535.0L1103 535.0L1103 562.3L1104 562.3L1104 587.7L1105 587.7L1105 587.7L1106 587.7L1106 580.3L1107 580.3L1107 581.0L1108 581.0L1108 551.0L1109 551.0L1109 769L1110 769L1110 769L1111 769L1111 769L1112 769L1112 652.0L1113 652.0L1113 642.0L1114 642.0L1114 642.0L1115 642.0L1115 649.3L1116 649.3L1116 642.0L1117 642.0L1117 658.0L1118 658.0L1118 656.0L1119 656.0L1119 641.3L1120 641.3L1120 632.0L1121 632.0L1121 679.3L1122 679.3L1122 697.5L1123 697.5L1123 664.0L1124 664.0L1124 603.3L1125 603.3L1125 620.0L1126 620.0L1126 608.0L1127 608.0L1127 610.0L1128 610.0L1128 584.0L1129 584.0L1129 582.0L1130 582.0L1130 609.3L1131 609.3L1131 588.0L1132 588.0L1132 610.0L1133 610.0L1133 610.0L1134 610.0L1134 846L1135 846L1135 834L1136 834L1136 834L1137 834L1137 834L1138 834L1138 834L1139 834L1139 834L1140 834L1140 834L1141 834L1141 834L1142 834L1142 834L1143 834L1143 834L1144 834L1144 834L1145 834L1145 834L1146 834L1146 769L1147 769L1147 769L1148 769L1148 769L1149 769L1149 769L1150 769L1150 769L1151 769L1151 769L1152 769L1152 555.0L1153 555.0L1153 487.5L1154 487.5L1154 537.5L1155 537.5L1155 520.0L1156 520.0L1156 523.3L1157 523.3L1157 522.5L1158 522.5L1158 523.3L1159 523.3L1159 542.5L1160 542.5L1160 530.0L1161 530.0L1161 523.3L1162 523.3L1162 542.5L1163 542.5L1163 530.0L1164 530.0L1164 550.8L1165 550.8L1165 550.8L1166 550.8L1166 522.5L1167 522.5L1167 535.0L1168 535.0L1168 550.8L1169 550.8L1169 550.8L1170 550.8L1170 522.5L1171 522.5L1171 535.0L1172 535.0L1172 535.0L1173 535.0L1173 570.8L1174 570.8L1174 530.0L1175 530.0L1175 577.5L1176 577.5L1176 555.0L1177 555.0L1177 556.7L1178 556.7L1178 535.8L1179 535.8L1179 535.8L1180 535.8L1180 556.7L1181 556.7L1181 556.7L1182 556.7L1182 556.7L1183 556.7L1183 535.8L1184 535.8L1184 556.7L1185 556.7L1185 550.8L1186 550.8L1186 542.5L1187 542.5L1187 520.0L1188 520.0L1188 555.0L1189 555.0L1189 575.8L1190 575.8L1190 555.0L1191 555.0L1191 580.8L1192 580.8L1192 581.7L1193 581.7L1193 578.3L1194 578.3L1194 580.0L1195 580.0L1195 598.3L1196 598.3L1196 580.0L1197 580.0L1197 575.0L1198 575.0L1198 598.3L1199 598.3L1199 580.0L1200 580.0L1200 579.5L1201 579.5L1201 598.0L1202 598.0L1202 612.0L1203 612.0L1203 580.0L1204 580.0L1204 616.0L1205 616.0L1205 576.0L1206 576.0L1206 581.5L1207 581.5L1207 578.0L1208 578.0L1208 581.0L1209 581.0L1209 578.0L1210 578.0L1210 598.0L1211 598.0L1211 582.0L1212 582.0L1212 599.0L1213 599.0L1213 599.0L1214 599.0L1214 599.0L1215 599.0L1215 599.0L1216 599.0L1216 597.0L1217 597.0L1217 557.0L1218 557.0L1218 581.0L1219 581.0L1219 617.0L1220 617.0L1220 579.0L1221 579.0L1221 599.0L1222 599.0L1222 599.0L1223 599.0L1223 599.0L1224 599.0L1224 581.0L1225 581.0L1225 599.0L1226 599.0L1226 598.0L1227 598.0L1227 582.0L1228 582.0L1228 581.0L1229 581.0L1229 581.0L1230 581.0L1230 581.0L1231 581.0L1231 579.0L1232 579.0L1232 581.3L1233 581.3L1233 581.3L1234 581.3L1234 581.3L1235 581.3L1235 598.3L1236 598.3L1236 581.3L1237 581.3L1237 581.3L1238 581.3L1238 581.3L1239 581.3L1239 598.3L1240 598.3L1240 597.4L1241 597.4L1241 581.3L1242 581.3L1242 598.3L1243 598.3L1243 616.2L1244 616.2L1244 579.4L1245 579.4L1245 576.6L1246 576.6L1246 575.7L1247 575.7L1247 615.3L1248 615.3L1248 577.5L1249 577.5L1249 577.5L1250 577.5L1250 554.9L1251 554.9L1251 596.4L1252 596.4L1252 577.5L1253 577.5L1253 575.7L1254 575.7L1254 615.3L1255 615.3L1255 599.2L1256 599.2L1256 598.3L1257 598.3L1257 581.3L1258 581.3L1258 581.3L1259 581.3L1259 551.1L1260 551.1L1260 575.7L1261 575.7L1261 535.1L1262 535.1L1262 554.9L1263 554.9L1263 472.8L1264 472.8L1264 535.1L1265 535.1L1265 852.5Z"/></clipPath>
<g clip-path="url(#cc)">
<rect x="973" y="806.4" width="293" height="45.1" fill="#008080"/>
<rect x="973" y="761.3" width="293" height="45.1" fill="#003f82"/>
<rect x="973" y="716.2" width="293" height="45.1" fill="#008080"/>
<rect x="973" y="671.1" width="293" height="45.1" fill="#003f82"/>
<rect x="973" y="626.0" width="293" height="45.1" fill="#008080"/>
<rect x="973" y="580.9" width="293" height="45.1" fill="#003f82"/>
<rect x="973" y="535.8" width="293" height="45.1" fill="#008080"/>
<rect x="973" y="490.7" width="293" height="45.1" fill="#003f82"/>
<rect x="973" y="445.6" width="293" height="45.1" fill="#008080"/>
</g>
<path d="M973.5 439V852.5H1266" stroke="#000" stroke-width="1.5" fill="none"/>
<path d="M973 439.5H1266.5" stroke="#000" stroke-width="1.2" fill="none"/>
<path d="M1266.5 439V853.0" stroke="#000" stroke-width="1.2" fill="none"/>
<path d="M1265.5 522V851.5" stroke="#ff8040" stroke-width="1" stroke-dasharray="1 2" fill="none"/>
<path d="M973 522.5H1266" stroke="#000" stroke-width="1" stroke-dasharray="1.5 1.5" fill="none"/>
<text x="929.5" y="855.5" font-size="10.5" font-weight="bold" fill="#ff0000">0</text>
<text x="929.5" y="810.4" font-size="10.5" font-weight="bold" fill="#ff0000">1</text>
<text x="929.5" y="765.3" font-size="10.5" font-weight="bold" fill="#ff0000">2</text>
<text x="929.5" y="720.2" font-size="10.5" font-weight="bold" fill="#ff0000">3</text>
<text x="929.5" y="675.1" font-size="10.5" font-weight="bold" fill="#ff0000">4</text>
<text x="929.5" y="630.0" font-size="10.5" font-weight="bold" fill="#ff0000">5</text>
<text x="929.5" y="584.9" font-size="10.5" font-weight="bold" fill="#ff0000">6</text>
<text x="929.5" y="539.8" font-size="10.5" font-weight="bold" fill="#ff0000">7</text>
<text x="929.5" y="494.7" font-size="10.5" font-weight="bold" fill="#ff0000">8</text>
<text x="929.5" y="449.6" font-size="10.5" font-weight="bold" fill="#ff0000">9</text>
<path d="M969 851.5H973 M969 806.4H973 M969 761.3H973 M969 716.2H973 M969 671.1H973 M969 626.0H973 M969 580.9H973 M969 535.8H973 M969 490.7H973 M969 445.6H973 M1010.2 852.5V858 M1046.9 852.5V858 M1083.6 852.5V858 M1120.3 852.5V858 M1157.0 852.5V858 M1193.7 852.5V858 M1230.4 852.5V858" stroke="#004000" stroke-width="1" fill="none"/>
<text x="929.5" y="868" font-size="10.5" font-weight="bold" fill="#ff0000">MPH</text>
<text x="970" y="868" font-size="10.5" font-weight="bold" fill="#ff0000">min</text>
<text x="1010.2" y="868" font-size="10.5" font-weight="bold" fill="#ff0000" text-anchor="middle">10</text>
<text x="1046.9" y="868" font-size="10.5" font-weight="bold" fill="#ff0000" text-anchor="middle">20</text>
<text x="1083.6" y="868" font-size="10.5" font-weight="bold" fill="#ff0000" text-anchor="middle">30</text>
<text x="1120.3" y="868" font-size="10.5" font-weight="bold" fill="#ff0000" text-anchor="middle">40</text>
<text x="1157.0" y="868" font-size="10.5" font-weight="bold" fill="#ff0000" text-anchor="middle">50</text>
<text x="1193.7" y="868" font-size="10.5" font-weight="bold" fill="#ff0000" text-anchor="middle">60</text>
<text x="1230.4" y="868" font-size="10.5" font-weight="bold" fill="#ff0000" text-anchor="middle">70</text>
<text x="1242" y="868" font-size="10.5" font-weight="bold" fill="#ff0000">79.80</text>
</g></svg>
<div class="a" style="left:0;top:879px;width:1277px;height:21px;background:#ece9d8"></div>
<div class="a" style="left:0;top:880px;width:1277px;height:1px;background:#fff"></div>
<div class="a" style="left:0;top:885px;font-size:13.5px;line-height:16px;white-space:nowrap">Colvos Passage, WA&nbsp; (Water)</div>
<div class="a" style="left:683px;top:883px;width:172px;height:20px;border-top:1px solid #aca899;border-left:1px solid #aca899;padding-left:1px;letter-spacing:0.6px;font-size:13.5px;line-height:17px;white-space:nowrap;overflow:hidden">N47°37.26&#39;, W122°24.57&#39;</div>
<div class="a" style="left:858px;top:883px;width:63px;height:20px;border-top:1px solid #aca899;border-left:1px solid #aca899;padding-left:2px;letter-spacing:0px;font-size:13.5px;line-height:17px;white-space:nowrap;overflow:hidden">0 ft</div>
<div class="a" style="left:923px;top:883px;width:107px;height:20px;border-top:1px solid #aca899;border-left:1px solid #aca899;padding-left:7px;letter-spacing:0.2px;font-size:13.5px;line-height:17px;white-space:nowrap;overflow:hidden">1 : 23,945</div>
<div class="a" style="left:1032px;top:883px;width:245px;height:20px;border-top:1px solid #aca899;border-left:1px solid #aca899;padding-left:0px;letter-spacing:0px;font-size:13.5px;line-height:17px;white-space:nowrap;overflow:hidden"></div>
</body></html>
